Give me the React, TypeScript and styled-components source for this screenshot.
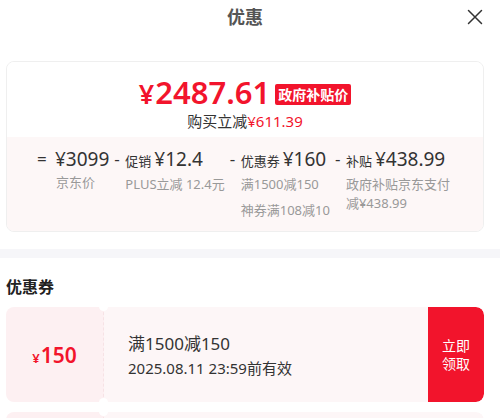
import React from 'react';
import styled, {createGlobalStyle} from 'styled-components';

const colors = {
  red: '#f2142c',
  text: '#333333',
  gray: '#999999',
  title: '#555555',
  pinkBg: '#fdf7f7',
  couponLeft: '#fdf0f2',
  couponRight: '#fdf6f7',
  border: '#efefef',
  band: '#f6f6f9',
};

const GlobalStyle = createGlobalStyle`
  html, body {
    margin: 0;
    padding: 0;
    background: #ffffff;
    font-family: "Noto Sans", "Noto Sans CJK SC", sans-serif;
    overflow: hidden;
  }
`;

type Part = {
  sign: string;
  label?: string;
  value: string;
  subs: string[];
  subWidth?: number;
};

const parts: Part[] = [
  {sign: '=', value: '¥3099', subs: ['京东价']},
  {sign: '-', label: '促销', value: '¥12.4', subs: ['PLUS立减 12.4元']},
  {sign: '-', label: '优惠券', value: '¥160', subs: ['满1500减150', '神券满108减10']},
  {sign: '-', label: '补贴', value: '¥438.99', subs: ['政府补贴京东支付减¥438.99'], subWidth: 106},
];

const coupons = [
  {amount: '150', rule: '满1500减150', date: '2025.08.11 23:59前有效', muted: false},
  {amount: '10', rule: '满108减10', date: '2025.08.11 23:59前有效', muted: true},
];

const CloseIcon = () => (
  <svg width="16" height="16" viewBox="0 0 16 16" fill="none">
    <path d="M1.5 1.5L14.5 14.5M14.5 1.5L1.5 14.5" stroke="#333" strokeWidth="1.5" strokeLinecap="round"/>
  </svg>
);

const App = () => {
  return (
    <Page>
      <GlobalStyle/>
      <Header>
        <Title>优惠</Title>
        <CloseButton><CloseIcon/></CloseButton>
      </Header>

      <Content>
        <PriceCard>
          <PriceTop>
            <PriceRow>
              <Price><Yen>¥</Yen>2487.61</Price>
              <Badge>政府补贴价</Badge>
            </PriceRow>
            <Saving>购买立减<span>¥611.39</span></Saving>
          </PriceTop>
          <Breakdown>
            {parts.map((p, i) => (
              <Col key={i}>
                <Sign $wide={p.sign === '='}>{p.sign}</Sign>
                <ColBody>
                  <MainLine>
                    {p.label && <Label>{p.label}</Label>}
                    <Value>{p.value}</Value>
                  </MainLine>
                  {p.subs.map((s, j) => (
                    <Sub key={j} $width={p.subWidth}>{s}</Sub>
                  ))}
                </ColBody>
              </Col>
            ))}
          </Breakdown>
        </PriceCard>
      </Content>

      <Band/>

      <Content>
        <SectionTitle>优惠券</SectionTitle>
        <CouponList>
          {coupons.map((c, i) => (
            <Coupon key={i}>
              <CouponAmount>
                <AmountText><small>¥</small>{c.amount}</AmountText>
              </CouponAmount>
              <CouponInfo>
                <CouponRule>{c.rule}</CouponRule>
                <CouponDate>{c.date}</CouponDate>
              </CouponInfo>
              <ClaimButton $muted={c.muted}>立即<br/>领取</ClaimButton>
            </Coupon>
          ))}
        </CouponList>
      </Content>
    </Page>
  );
};

const Page = styled.div`
  width: 500px;
  height: 418px;
  overflow: hidden;
  background: #fff;
`;

const Header = styled.div`
  position: relative;
  height: 34px;
  display: flex;
  align-items: center;
  justify-content: center;
  padding-right: 10px;
`;

const Title = styled.div`
  font-size: 18px;
  font-weight: 700;
  color: ${colors.title};
  margin-top: -3px;
`;

const CloseButton = styled.div`
  position: absolute;
  right: 17px;
  top: 9px;
  display: flex;
`;

const Content = styled.div`
  padding: 0 16px 0 6px;
`;

const PriceCard = styled.div`
  margin-top: 27px;
  border: 1px solid ${colors.border};
  border-radius: 8px;
  overflow: hidden;
`;

const PriceTop = styled.div`
  background: #fff;
  height: 75px;
  display: flex;
  flex-direction: column;
  align-items: center;
  padding-top: 13px;
  box-sizing: border-box;
`;

const PriceRow = styled.div`
  display: flex;
  align-items: center;
  gap: 5px;
  height: 36px;
`;

const Price = styled.div`
  font-size: 31px;
  font-weight: 600;
  color: ${colors.red};
  line-height: 36px;
`;

const Yen = styled.span`
  font-size: 27px;
  margin-right: 1px;
`;

const Badge = styled.div`
  background: ${colors.red};
  color: #fff;
  font-size: 14px;
  font-weight: 700;
  line-height: 21px;
  padding: 0 3px;
  border-radius: 2px;
  margin-top: 2px;
`;

const Saving = styled.div`
  margin-top: -1px;
  font-size: 15px;
  line-height: 22px;
  color: ${colors.text};

  span {
    color: ${colors.red};
  }
`;

const Breakdown = styled.div`
  background: ${colors.pinkBg};
  height: 94px;
  box-sizing: border-box;
  display: flex;
  padding: 9px 0 0 30px;
  gap: 5px;
`;

const Col = styled.div`
  display: flex;
  align-items: flex-start;
`;

const Sign = styled.div<{$wide?: boolean}>`
  width: ${p => (p.$wide ? 19 : 11)}px;
  font-size: 17px;
  line-height: 26px;
  color: ${colors.text};
`;

const ColBody = styled.div`
  display: flex;
  flex-direction: column;
`;

const MainLine = styled.div`
  display: flex;
  align-items: baseline;
  gap: 4px;
  line-height: 26px;
  white-space: nowrap;
`;

const Label = styled.span`
  font-size: 13px;
  color: ${colors.text};
`;

const Value = styled.span`
  font-size: 19px;
  color: ${colors.text};
  margin-left: -1px;
`;

const Sub = styled.div<{$width?: number}>`
  font-size: 13px;
  line-height: 19px;
  color: ${colors.gray};
  margin-top: 1px;
  margin-bottom: 6px;
  ${p => (p.$width ? `width: ${p.$width}px; margin-bottom: 0;` : 'white-space: nowrap;')}
`;

const Band = styled.div`
  height: 9px;
  background: ${colors.band};
  margin-top: 17px;
`;

const SectionTitle = styled.div`
  margin-top: 18px;
  font-size: 16px;
  font-weight: 700;
  color: #222;
  line-height: 22px;
`;

const CouponList = styled.div`
  margin-top: 9px;
  display: flex;
  flex-direction: column;
  gap: 10px;
`;

const Coupon = styled.div`
  position: relative;
  height: 95px;
  flex-shrink: 0;
  display: flex;
  border-radius: 8px;
  overflow: hidden;
`;

const CouponAmount = styled.div`
  position: relative;
  width: 97px;
  background: ${colors.couponLeft};
  display: flex;
  align-items: center;
  justify-content: center;
  border-right: 1px dashed #f6e2e5;

  &::before, &::after {
    content: '';
    position: absolute;
    right: -5px;
    width: 9px;
    height: 9px;
    border-radius: 50%;
    background: #fff;
  }
  &::before {
    top: -5px;
  }
  &::after {
    bottom: -5px;
  }
`;

const AmountText = styled.div`
  color: ${colors.red};
  font-size: 21px;
  font-weight: 600;

  small {
    font-size: 13px;
    margin-right: 1px;
  }
`;

const CouponInfo = styled.div`
  flex: 1;
  background: ${colors.couponRight};
  display: flex;
  flex-direction: column;
  justify-content: center;
  padding-left: 24px;
  color: ${colors.text};
`;

const CouponRule = styled.div`
  font-size: 17px;
  line-height: 25px;
`;

const CouponDate = styled.div`
  font-size: 15px;
  line-height: 22px;
  margin-top: 1px;
`;

const ClaimButton = styled.div<{$muted?: boolean}>`
  width: 56px;
  background: ${p => (p.$muted ? colors.couponRight : colors.red)};
  color: ${p => (p.$muted ? colors.red : '#fff')};
  font-size: 14px;
  line-height: 18px;
  display: flex;
  align-items: center;
  justify-content: center;
  text-align: center;
  border-radius: 0 8px 8px 0;
`;

export default App;
